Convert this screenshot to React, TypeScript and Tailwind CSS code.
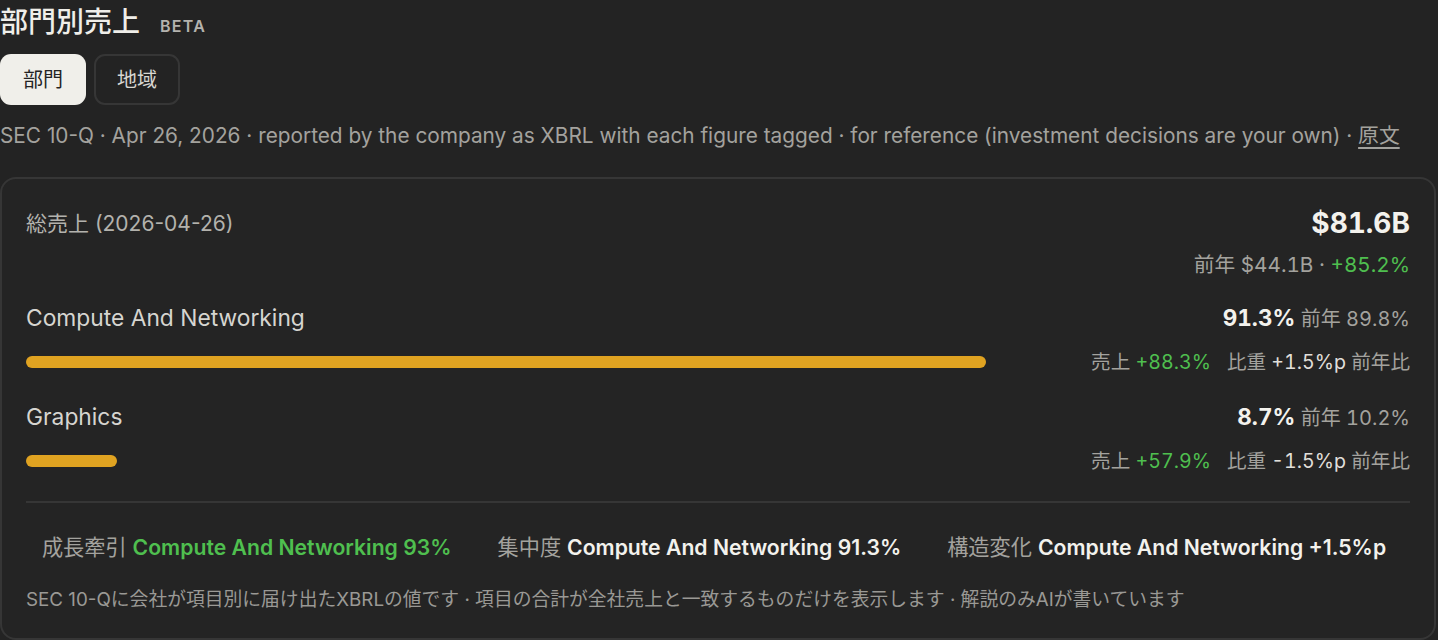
import React from 'react';

const segments = [
  { name: 'Compute And Networking', share: 91.3, prev: '89.8%', sales: '+88.3%', mix: '+1.5%p' },
  { name: 'Graphics', share: 8.7, prev: '10.2%', sales: '+57.9%', mix: '-1.5%p' },
];

const inter = { fontFamily: 'Inter, "Noto Sans CJK JP", sans-serif' };

export default function App() {
  return (
    <div className="w-[1438px] min-h-[640px] bg-[#232323] text-[#efeee9]" style={inter}>
      {/* Header */}
      <div className="flex items-baseline gap-[20px] pt-[4px]">
        <h2 className="text-[28px] leading-[36px] font-medium">部門別売上</h2>
        <span className="text-[16px] font-semibold tracking-[0.08em] text-[#b4b3ae]">BETA</span>
      </div>

      {/* Tabs */}
      <div className="flex gap-2 mt-[14px]">
        <button className="h-[51px] px-[23px] rounded-[11px] bg-[#f0efea] text-[#242424] text-[20px]">部門</button>
        <button className="h-[51px] px-[21px] rounded-[11px] border-2 border-[#363636] text-[#d8d7d2] text-[20px]">地域</button>
      </div>

      {/* Meta */}
      <p className="mt-[17px] text-[20.8px] leading-[28px] text-[#a3a29e] whitespace-nowrap">
        SEC 10-Q · Apr 26, 2026 · reported by the company as XBRL with each figure tagged · for reference (investment decisions are your own) · <span className="underline underline-offset-4">原文</span>
      </p>

      {/* Card */}
      <div className="mt-[27px] w-[1436px] rounded-[16px] border-2 border-[#363636] bg-[#242424] px-[24px] pt-[28px] pb-[26px]">
        {/* Total */}
        <div className="flex justify-between">
          <div className="text-[21px] leading-[28px] text-[#b3b2ad] mt-[3px]">総売上 (2026-04-26)</div>
          <div className="text-right tabular-nums">
            <div className="text-[28px] leading-[32px] font-bold text-[#f3f2ed]">$81.6B</div>
            <div className="mt-[13px] text-[20.7px] leading-[26px] text-[#a3a29e]">
              前年 $44.1B · <span className="text-[#4fbf4f]">+85.2%</span>
            </div>
          </div>
        </div>

        {/* Segments */}
        <div className="mt-[25px] flex flex-col gap-[27px]">
          {segments.map((s) => (
            <div key={s.name} className="flex gap-3">
              <div className="flex-1">
                <div className="text-[22.8px] leading-[30px] text-[#d6d5d0]">{s.name}</div>
                <div className="mt-[23px] h-[12px] w-full">
                  <div className="h-full rounded-full bg-[#e0a321]" style={{ width: `${s.share}%` }} />
                </div>
              </div>
              <div className="w-[321px] shrink-0 flex flex-col items-end whitespace-nowrap tabular-nums">
                <div className="text-[20px] leading-[30px] text-[#a3a29e]">
                  <span className="text-[22.5px] font-bold text-[#f3f2ed]">{s.share}%</span> 前年 {s.prev}
                </div>
                <div className="mt-[15px] text-[19.6px] leading-[26px] text-[#a3a29e]">
                  売上 <span className="text-[#4fbf4f]">{s.sales}</span>
                  <span className="ml-[16px]">比重 </span>
                  <span className="text-[#e0dfda]">{s.mix}</span> 前年比
                </div>
              </div>
            </div>
          ))}
        </div>

        {/* Divider */}
        <div className="mt-[27px] h-[2px] bg-[#363636]" />

        {/* Insights */}
        <div className="mt-[30px] pr-[8px] flex justify-center gap-[46px] text-[21.2px] leading-[28px] whitespace-nowrap">
          <div>
            <span className="text-[#a3a29e]">成長牽引 </span>
            <span className="font-semibold text-[#4fbf4f]">Compute And Networking 93%</span>
          </div>
          <div>
            <span className="text-[#a3a29e]">集中度 </span>
            <span className="font-semibold text-[#f3f2ed]">Compute And Networking 91.3%</span>
          </div>
          <div>
            <span className="text-[#a3a29e]">構造変化 </span>
            <span className="font-semibold text-[#f3f2ed]">Compute And Networking +1.5%p</span>
          </div>
        </div>

        {/* Footnote */}
        <p className="mt-[27px] text-[18.8px] leading-[24px] text-[#9a9995]">
          SEC 10-Qに会社が項目別に届け出たXBRLの値です · 項目の合計が全社売上と一致するものだけを表示します · 解説のみAIが書いています
        </p>
      </div>
    </div>
  );
}
